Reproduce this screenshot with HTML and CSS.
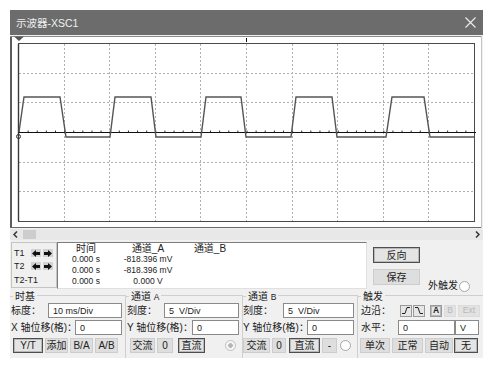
FILE: index.html
```html
<!DOCTYPE html>
<html>
<head>
<meta charset="utf-8">
<link rel="stylesheet" href="styles.css">
</head>
<body>
<div class="win">
  <div class="title">
    <span class="ttl">示波器-XSC1</span>
    <svg class="close" width="11" height="11" viewBox="0 0 11 11"><path d="M0.5 0.5L10.5 10.5M10.5 0.5L0.5 10.5" stroke="#eeeeee" stroke-width="1.1" fill="none"/></svg>
  </div>
  <svg class="scope" width="473" height="194" viewBox="0 0 473 194">
    <rect x="0" y="1" width="472" height="192" fill="#ffffff"/>
    <path d="M1 1V193" stroke="#5c5c5c" stroke-width="2"/>
    <path d="M0 1.5H472" stroke="#8a8a8a"/>
    <path d="M0 192.5H472" stroke="#6a6a6a"/>
    <path d="M471.5 1V193" stroke="#c4c4c4"/>
    <path d="M54.5 9V186M99.5 9V186M145.5 9V186M190.5 9V186M236.5 9V186M282.5 9V186M327.5 9V186M373.5 9V186M418.5 9V186" stroke="#b0b0b0" stroke-dasharray="2 2" fill="none"/>
    <path d="M9 38.5H464M9 67.5H464M9 127.5H464M9 156.5H464" stroke="#b0b0b0" stroke-dasharray="2 2" fill="none"/>
    <rect x="8.5" y="8.5" width="456" height="178" fill="none" stroke="#4a4a4a"/>
    <path d="M8.5 9V186" stroke="#3a3a3a" stroke-width="1.4"/>
    <path d="M8.5 96.5H464.5" stroke="#333" stroke-width="2" stroke-dasharray="1 8.12" fill="none"/>
    <path d="M8.5 97.5H466" stroke="#111" fill="none"/>
    <path d="M236.5 3V7" stroke="#111"/>
    <polygon points="4,1.5 14,1.5 9,6" fill="#555"/>
    <circle cx="8.5" cy="101.5" r="2" fill="none" stroke="#333"/>
    <polyline points="9,97 14,62 50,62 56,102 100,102 105,62 141,62 146,102 191,102 196,62 231,62 236,102 281,102 286,62 322,62 327,102 376,102 382,62 414,62 420,102 464,102" fill="none" stroke="#555" stroke-width="1.4"/>
  </svg>
  <div class="hscroll">
    <svg width="5" height="7" viewBox="0 0 5 7"><path d="M4 0.5L1 3.5L4 6.5" stroke="#333" stroke-width="1.5" fill="none"/></svg>
    <span class="thumb"></span>
    <span class="sp"></span>
    <svg width="5" height="7" viewBox="0 0 5 7"><path d="M1 0.5L4 3.5L1 6.5" stroke="#333" stroke-width="1.5" fill="none"/></svg>
  </div>
  <div class="readout">
    <div class="cursors">
      <div class="crow">
        <span class="cl">T1</span>
        <span class="ab"><svg width="8" height="7" viewBox="0 0 8 7"><polygon points="0,3.5 4,0 4,2 8,2 8,5 4,5 4,7" fill="#111"/></svg></span>
        <span class="ab"><svg width="8" height="7" viewBox="0 0 8 7"><polygon points="8,3.5 4,0 4,2 0,2 0,5 4,5 4,7" fill="#111"/></svg></span>
      </div>
      <div class="crow">
        <span class="cl">T2</span>
        <span class="ab"><svg width="8" height="7" viewBox="0 0 8 7"><polygon points="0,3.5 4,0 4,2 8,2 8,5 4,5 4,7" fill="#111"/></svg></span>
        <span class="ab"><svg width="8" height="7" viewBox="0 0 8 7"><polygon points="8,3.5 4,0 4,2 0,2 0,5 4,5 4,7" fill="#111"/></svg></span>
      </div>
      <div class="crow last"><span class="cl">T2-T1</span></div>
    </div>
    <div class="data">
      <span class="hd">时间</span><span class="hd">通道_A</span><span class="hd">通道_B</span>
      <span class="v">0.000 s</span><span class="v">-818.396 mV</span><span class="v"></span>
      <span class="v">0.000 s</span><span class="v">-818.396 mV</span><span class="v"></span>
      <span class="v">0.000 s</span><span class="v">0.000 V</span><span class="v"></span>
    </div>
    <div class="rbtns">
      <span class="btn big on">反向</span>
      <span class="btn big">保存</span>
    </div>
    <div class="ext">外触发<span class="radio"></span></div>
  </div>
  <div class="controls">
    <div class="grp g1">
      <div class="gh"><span>时基</span></div>
      <div class="gbody">
        <div class="row r1"><span class="lbl">标度：</span><span class="inp">10 ms/Div</span></div>
        <div class="row r2"><span class="lbl">X 轴位移(格)：</span><span class="inp">0</span></div>
        <div class="row r3">
          <span class="btn on w30">Y/T</span><span class="btn w23">添加</span><span class="btn w23">B/A</span><span class="btn w23">A/B</span>
        </div>
      </div>
    </div>
    <div class="grp g2">
      <div class="gh"><span>通道 <small>A</small></span></div>
      <div class="gbody">
        <div class="row r1"><span class="lbl">刻度：</span><span class="inp">5 &nbsp;V/Div</span></div>
        <div class="row r2"><span class="lbl">Y 轴位移(格)：</span><span class="inp">0</span></div>
        <div class="row r3">
          <span class="btn w25">交流</span><span class="btn w16 m2">0</span><span class="btn on w27 m5">直流</span><span class="radio dot m20"></span>
        </div>
      </div>
    </div>
    <div class="grp g3">
      <div class="gh"><span>通道 <small>B</small></span></div>
      <div class="gbody">
        <div class="row r1"><span class="lbl">刻度：</span><span class="inp">5 &nbsp;V/Div</span></div>
        <div class="row r2"><span class="lbl">Y 轴位移(格)：</span><span class="inp">0</span></div>
        <div class="row r3">
          <span class="btn w27">交流</span><span class="btn w14 m2">0</span><span class="btn on w31 m3">直流</span><span class="btn w15 m2">-</span><span class="radio m3"></span>
        </div>
      </div>
    </div>
    <div class="grp g4">
      <div class="gh"><span>触发</span></div>
      <div class="gbody">
        <div class="row r1">
          <span class="lbl">边沿：</span>
          <span class="btn sm"><svg width="10" height="9" viewBox="0 0 10 9"><path d="M1 7.5H4L6 1.5H9" stroke="#222" fill="none"/></svg></span>
          <span class="btn sm m1"><svg width="10" height="9" viewBox="0 0 10 9"><path d="M1 1.5H4L6 7.5H9" stroke="#222" fill="none"/></svg></span>
          <span class="btn sm on m5 bold">A</span>
          <span class="btn sm m2 dis">B</span>
          <span class="btn sm ext2 m2 dis">Ext</span>
        </div>
        <div class="row r2"><span class="lbl lt">水平：</span><span class="inp lv">0</span><span class="inp vv">V</span></div>
        <div class="row r3">
          <span class="btn w30">单次</span><span class="btn w31 m2">正常</span><span class="btn w28 m2">自动</span><span class="btn on w24 m1">无</span>
        </div>
      </div>
    </div>
  </div>
</div>
</body>
</html>
```

FILE: styles.css
```css
* { box-sizing: border-box; }
body {
  margin: 0;
  background: #ffffff;
  font-family: "Liberation Sans", "Noto Sans CJK SC", sans-serif;
  font-size: 10px;
  color: #222;
}
.win {
  margin: 10px 0 0 10px;
  width: 473px;
  height: 348px;
  background: #f0f0f0;
  display: flex;
  flex-direction: column;
}
.title {
  height: 25px;
  flex: none;
  background: #6c6c6c;
  color: #f0f0f0;
  display: flex;
  align-items: center;
  justify-content: space-between;
  padding: 0 7px 0 6px;
  font-size: 10.5px;
}
.close { display: block; }
.scope { display: block; flex: none; }
.hscroll {
  height: 11px;
  flex: none;
  display: flex;
  align-items: center;
  background: #e8e8e8;
  padding: 0 3px;
}
.hscroll svg { display: block; }
.thumb { width: 13px; height: 9px; background: #cdcdcd; margin-left: 5px; }
.sp { flex: 1; }
.readout { height: 50px; flex: none; display: flex; align-items: flex-start; }
.cursors {
  margin: 2px 0 0 1px;
  width: 46px;
  height: 46px;
  border: 1px solid #c4c4c4;
  padding: 4px 0 0 2px;
}
.crow { display: flex; align-items: center; height: 12px; margin-bottom: 1px; }
.crow.last { margin-top: 2px; }
.cl { width: 17px; font-size: 9px; line-height: 12px; white-space: nowrap; }
.ab {
  width: 10px;
  height: 8px;
  background: #d2d2d2;
  margin-right: 2px;
  display: flex;
  align-items: center;
  justify-content: center;
}
.ab svg { display: block; }
.data {
  margin-top: 2px;
  width: 310px;
  height: 47px;
  background: #fff;
  border-top: 1px solid #7c7c7c;
  border-left: 1px solid #7c7c7c;
  border-right: 1px solid #e0e0e0;
  border-bottom: 1px solid #e0e0e0;
  display: grid;
  grid-template-columns: 56px 68px 56px;
  grid-auto-rows: 11px;
  align-items: center;
  justify-items: center;
}
.hd { font-size: 10px; line-height: 11px; white-space: nowrap; }
.v { font-size: 8.5px; line-height: 11px; white-space: nowrap; }
.rbtns { margin-left: 6px; padding-top: 7px; display: flex; flex-direction: column; gap: 6px; }
.ext { margin: 40px 0 0 8px; display: flex; align-items: center; gap: 1px; line-height: 12px; }
.radio {
  display: block;
  width: 11px;
  height: 11px;
  border-radius: 50%;
  border: 1px solid #a6a6a6;
  background: #fff;
  flex: none;
}
.radio.dot { background: radial-gradient(circle, #b4b4b4 0 2px, #f6f6f6 2.6px); border-color: #c0c0c0; }
.btn {
  display: flex;
  align-items: center;
  justify-content: center;
  height: 15px;
  background: #dedede;
  border: 1px solid #cdcdcd;
  font-size: 10px;
  line-height: 13px;
  white-space: nowrap;
  flex: none;
}
.btn.big { width: 47px; height: 16px; font-size: 10px; }
.btn.on { border-color: #4e4e4e; background: #e4e4e4; box-shadow: inset 0 0 0 1px #b8b8b8; }
.btn.sm { width: 12px; height: 12px; font-size: 8.5px; background: #e6e6e6; border-color: #9a9a9a; }
.btn.sm svg { display: block; }
.btn.ext2 { width: 22px; }
.btn.dis { color: #b8b8b8; background: #e2e2e2; border-color: #dcdcdc; }
.bold { font-weight: bold; }
.controls { height: 68px; flex: none; display: flex; }
.grp { flex: none; }
.g1 { width: 116px; }
.g2 { width: 117px; }
.g3 { width: 115px; }
.g4 { flex: 1; }
.gh { height: 13px; display: flex; line-height: 13px; }
.gh::before { content: ""; width: 3px; border-top: 1px solid #cfcfcf; align-self: center; }
.gh span { padding: 0 2px; white-space: nowrap; }
.gh small { font-size: 8.5px; }
.gh::after {
  content: "";
  flex: 1;
  align-self: flex-end;
  height: 7px;
  border-top: 1px solid #cfcfcf;
  border-right: 1px solid #cfcfcf;
}
.g4 .gh::after { border-right: none; }
.gbody { height: 55px; border-right: 1px solid #cfcfcf; }
.g4 .gbody { border-right: none; }
.row { display: flex; align-items: center; height: 15px; }
.row.r2 { margin-top: 2px; }
.row.r3 { margin-top: 3px; }
.lbl { width: 38px; padding-left: 1px; white-space: nowrap; line-height: 15px; flex: none; }
.r2 .lbl { width: 65px; }
.g3 .lbl { padding-left: 0; }
.g3 .r1 .lbl { width: 40px; }
.g3 .r2 .lbl { width: 64px; }
.g2 .r2 .lbl { width: 66px; }
.inp {
  flex: 1;
  height: 15px;
  margin-right: 3px;
  background: #fff;
  border: 1px solid #8a8a8a;
  font-size: 9px;
  padding-left: 4px;
  display: flex;
  align-items: center;
  white-space: nowrap;
}
.g1 .r3 { padding-left: 3px; gap: 2px; }
.g2 .r3 { padding-left: 4px; }
.g4 .gbody { padding-left: 2px; }
.g4 .r1 { height: 15px; }
.g4 .r1 .lbl { width: 40px; }
.g4 .r2 .lbl.lt { width: 38px; }
.inp.lv { flex: none; width: 57px; margin-right: 0; }
.inp.vv { flex: none; width: 24px; margin-right: 0; }
.w14 { width: 14px; }
.w15 { width: 15px; }
.w16 { width: 16px; }
.w23 { width: 23px; }
.w24 { width: 24px; }
.w25 { width: 25px; }
.w27 { width: 27px; }
.w28 { width: 28px; }
.w30 { width: 30px; }
.w31 { width: 31px; }
.m1 { margin-left: 1px; }
.m2 { margin-left: 2px; }
.m3 { margin-left: 3px; }
.m5 { margin-left: 5px; }
.m20 { margin-left: 20px; }
```
